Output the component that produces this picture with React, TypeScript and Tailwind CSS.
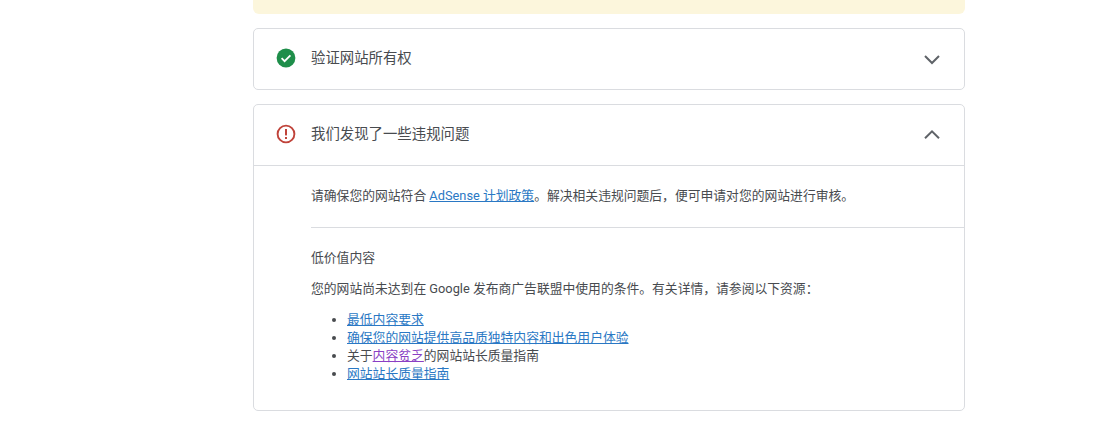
import React from "react";

function Chevron({ up }: { up?: boolean }) {
  return (
    <svg width="24" height="24" viewBox="0 0 24 24" className="shrink-0" fill="none" stroke="#5f6368" strokeWidth="2">
      {up ? <path d="M5 15.2l7-6.8 7 6.8" /> : <path d="M5 9l7 7 7-7" />}
    </svg>
  );
}

function Check() {
  return (
    <svg width="20" height="20" viewBox="0 0 20 20" className="mb-[3px] shrink-0">
      <circle cx="10" cy="10" r="9.4" fill="#1e8e4a" />
      <path d="M5.6 10.2l3 3 5.8-5.8" fill="none" stroke="#fff" strokeWidth="1.8" />
    </svg>
  );
}

function Alert() {
  return (
    <svg width="20" height="20" viewBox="0 0 20 20" className="mb-[2px] shrink-0">
      <circle cx="10" cy="10" r="8.4" fill="none" stroke="#c0433a" strokeWidth="1.9" />
      <rect x="9" y="5" width="2" height="6.4" fill="#c0433a" />
      <rect x="9" y="13" width="2" height="2" fill="#c0433a" />
    </svg>
  );
}

const link = "text-[#2a78c4] underline";

export default function App() {
  return (
    <div className="h-[437px] w-[1102px] overflow-hidden bg-white font-['Roboto','Noto_Sans_CJK_SC',sans-serif] text-[12.8px] text-[#484b4f]">
      <div className="ml-[253px] flex w-[712px] flex-col">
        <div className="h-[14px] rounded-b-[6px] bg-[#fcf6dc]" />

        <section className="mt-[14px] flex h-[62px] items-center rounded-[5px] border border-[#dadce0] pl-[22px] pr-[20px]">
          <Check />
          <h2 className="ml-[15px] flex-1 text-[14.4px] font-normal">验证网站所有权</h2>
          <Chevron />
        </section>

        <section className="mt-[14px] h-[307px] rounded-[5px] border border-[#dadce0]">
          <div className="flex h-[61px] items-center border-b border-[#dadce0] pl-[22px] pr-[20px]">
            <Alert />
            <h2 className="ml-[15px] flex-1 text-[14.4px] font-normal">我们发现了一些违规问题</h2>
            <Chevron up />
          </div>
          <div className="pl-[57px]">
            <p className="flex h-[62px] items-center border-b border-[#dadce0] pb-[2px]">
              <span>
                请确保您的网站符合 <a className={link}>AdSense 计划政策</a>。解决相关违规问题后，便可申请对您的网站进行审核。
              </span>
            </p>
            <h3 className="mt-[21px] text-[12.8px] font-normal leading-[18px]">低价值内容</h3>
            <p className="mt-[13px] leading-[18px]">您的网站尚未达到在 Google 发布商广告联盟中使用的条件。有关详情，请参阅以下资源：</p>
            <ul className="mt-[13px] list-disc pl-[36px] leading-[18px] marker:text-[#484b4f]">
              <li><a className={link}>最低内容要求</a></li>
              <li><a className={link}>确保您的网站提供高品质独特内容和出色用户体验</a></li>
              <li>关于<a className="text-[#8a3fc4] underline">内容贫乏</a>的网站站长质量指南</li>
              <li><a className={link}>网站站长质量指南</a></li>
            </ul>
          </div>
        </section>
      </div>
    </div>
  );
}
